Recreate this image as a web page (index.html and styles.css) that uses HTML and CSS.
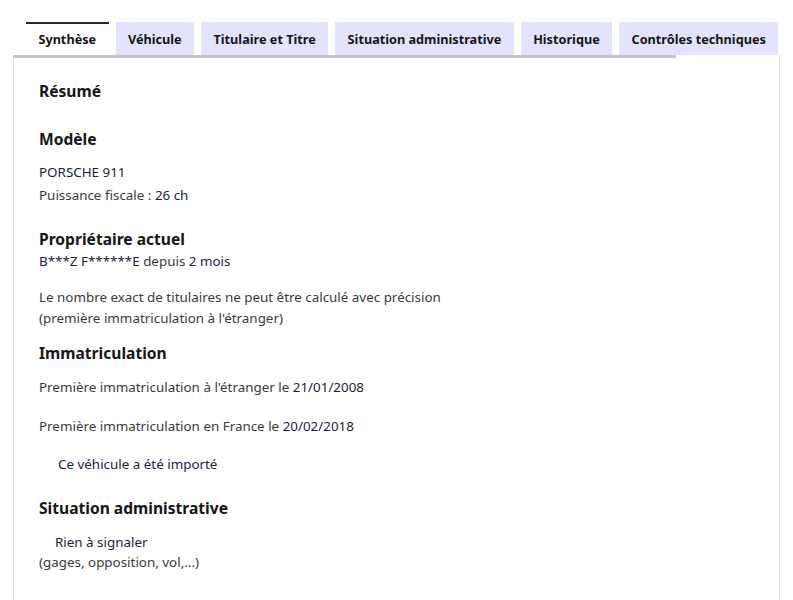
FILE: index.html
```html
<!DOCTYPE html>
<html lang="fr">
<head>
<meta charset="utf-8">
<title>Synthèse du véhicule</title>
<link rel="stylesheet" href="styles.css">
</head>
<body>
<div class="page">
  <ul class="tabs">
    <li class="tab active">Synthèse</li>
    <li class="tab">Véhicule</li>
    <li class="tab">Titulaire et Titre</li>
    <li class="tab">Situation administrative</li>
    <li class="tab">Historique</li>
    <li class="tab">Contrôles techniques</li>
  </ul>
  <div class="panel">
    <div class="rule"></div>
    <div class="panel-body">
      <h2 class="title">Résumé</h2>

      <h3 class="section s-model">Modèle</h3>
      <div class="lines model-lines">
        <div class="value">PORSCHE 911</div>
        <div class="label">Puissance fiscale : <span class="value">26 ch</span></div>
      </div>

      <h3 class="section s-owner">Propriétaire actuel</h3>
      <div class="line value">B***Z F******E <span class="label">depuis</span> 2 mois</div>
      <p class="note">Le nombre exact de titulaires ne peut être calculé avec précision<br>(première immatriculation à l'étranger)</p>

      <h3 class="section s-reg">Immatriculation</h3>
      <div class="line label reg-first">Première immatriculation à l'étranger le <span class="value">21/01/2008</span></div>
      <div class="line label reg-fr">Première immatriculation en France le <span class="value">20/02/2018</span></div>
      <div class="line value imported">Ce véhicule a été importé</div>

      <h3 class="section s-admin">Situation administrative</h3>
      <div class="admin">
        <div class="value nothing">Rien à signaler</div>
        <div class="label">(gages, opposition, vol,...)</div>
      </div>
    </div>
  </div>
</div>
</body>
</html>
```

FILE: styles.css
```css
* { box-sizing: border-box; }

html, body {
  margin: 0;
  background: #ffffff;
  font-family: "Noto Sans", "Open Sans", sans-serif;
  color: #161616;
}

.page {
  padding: 22px 13px 0;
}

/* tab strip */
.tabs {
  display: flex;
  gap: 7px;
  list-style: none;
  margin: 0;
  padding: 0 0 0 13px;
}

.tab {
  flex: 0 0 auto;
  height: 33px;
  padding: 0 12.4px;
  display: flex;
  align-items: center;
  background: #e3e3fd;
  font-size: 12.7px;
  font-weight: 700;
  color: #161616;
  white-space: nowrap;
}

.tab.active {
  background: #ffffff;
  box-shadow: inset 0 2px 0 #24244a;
}

/* panel under the tabs */
.panel {
  border-left: 1px solid #e2e2e2;
  border-right: 1px solid #e2e2e2;
  min-height: 560px;
}

.rule {
  width: 663px;
  height: 3px;
  margin-left: -1px;
  background: #c6c6c6;
}

.panel-body {
  padding: 21px 25px 0;
  font-size: 13.4px;
}

.title,
.section {
  margin: 0;
  font-size: 15.6px;
  font-weight: 700;
  line-height: 24px;
  color: #161616;
}

.label { color: #3a3a3a; }
.value { color: #1b1b4a; }
.label .value { color: #1b1b4a; }
.value .label { color: #3a3a3a; }

.line { line-height: 22px; }

.s-model { margin-top: 24px; }

.model-lines {
  margin-top: 10px;
  line-height: 23px;
}

.s-owner {
  margin-top: 21px;
  line-height: 22px;
}

.note {
  margin: 15px 0 0;
  line-height: 21px;
  color: #3a3a3a;
}

.s-reg { margin-top: 12px; }
.reg-first { margin-top: 11px; }
.reg-fr { margin-top: 17px; }

.imported {
  margin-top: 16px;
  padding-left: 19px;
}

.s-admin { margin-top: 21px; }

.admin {
  margin-top: 12px;
  line-height: 20px;
}

.nothing { padding-left: 16px; }
```
